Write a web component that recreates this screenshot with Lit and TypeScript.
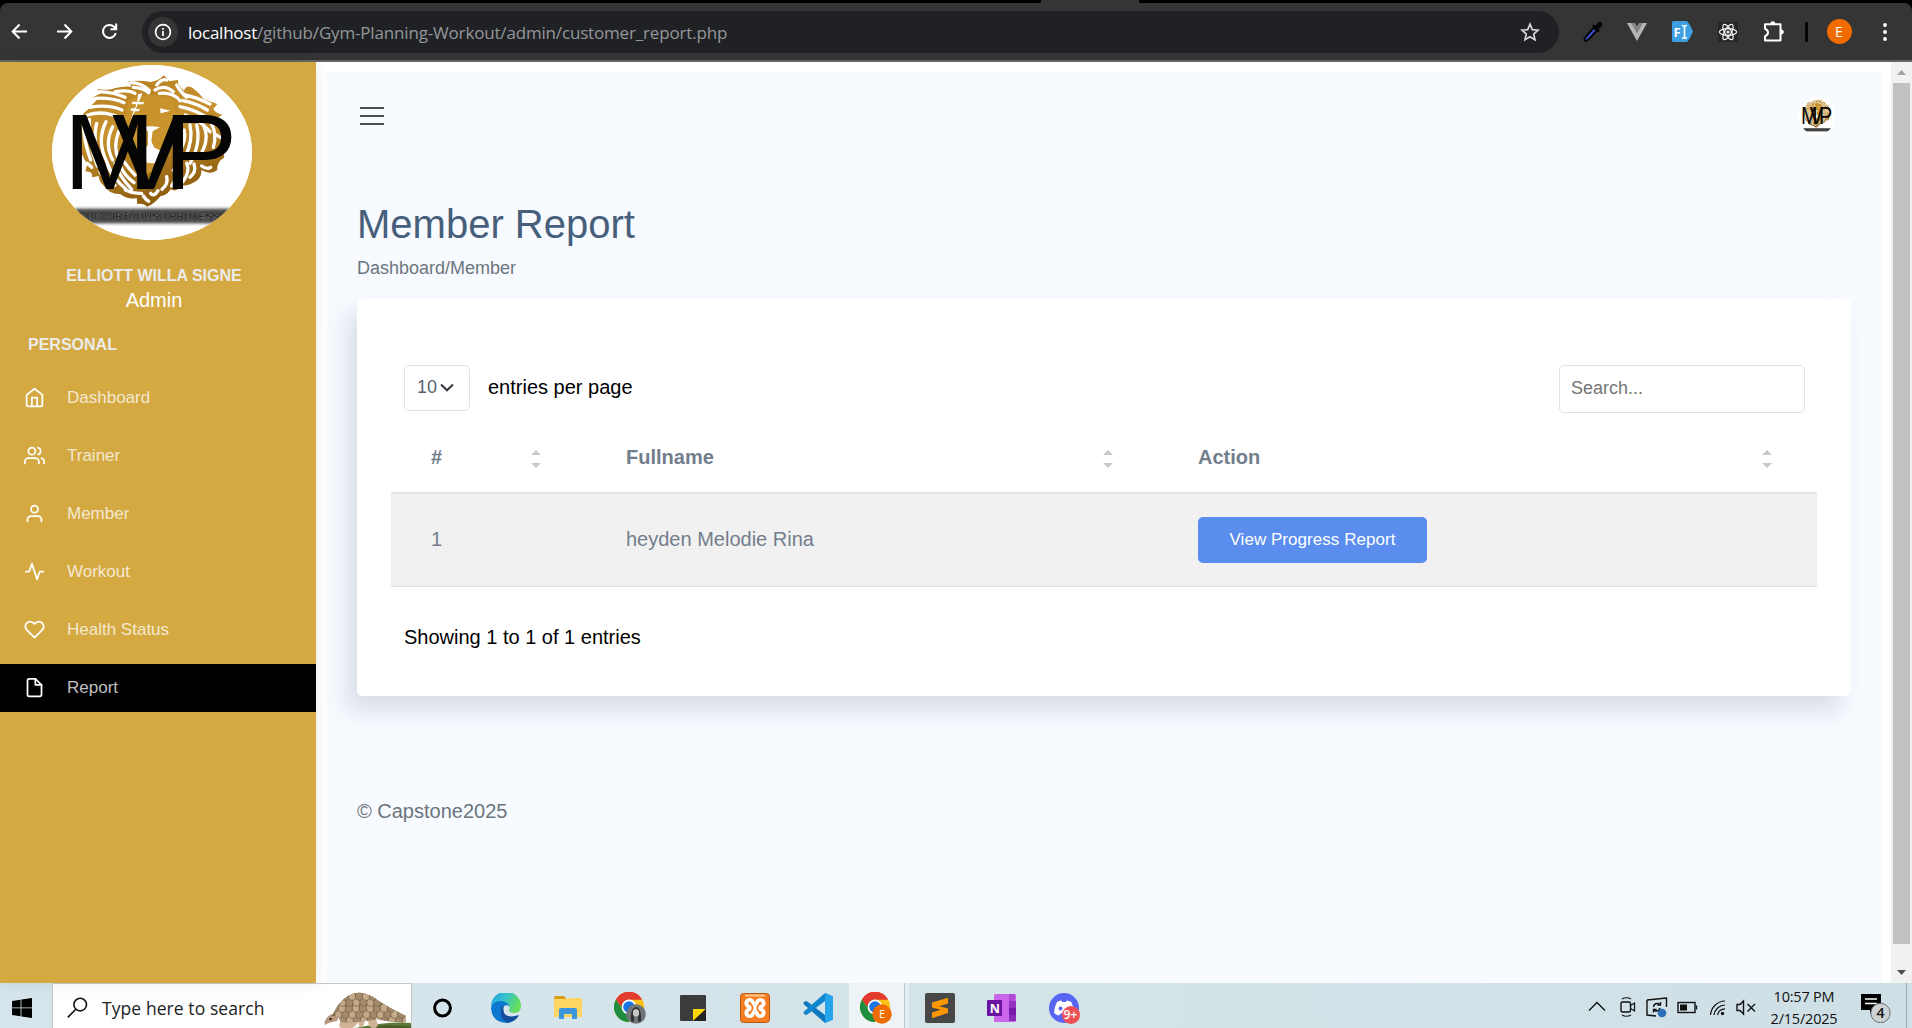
import { LitElement, html, svg, css } from "lit";
import { customElement, property } from "lit/decorators.js";

/* Emblem: lion head behind the club initials. */
@customElement("club-emblem")
class ClubEmblem extends LitElement {
  static styles = css`
    :host { display: block; border-radius: 50%; overflow: hidden; background: #fff; }
    .art { display: block; width: 100%; height: 100%; }
    .mono { font-family: "Liberation Sans", Arial, sans-serif; font-size: 100px; fill: #050505; }
    .band { font: 700 34px "Liberation Sans", Arial, sans-serif; fill: #111; stroke: #858585; stroke-width: 1.2; }
  `;
  render() {
    const hair = [
      "M300 95 Q345 98 375 112", "M285 115 Q335 112 372 128", "M268 142 Q325 132 366 150", "M262 165 Q310 150 356 172",
      "M345 95 Q385 88 405 100", "M392 68 Q425 68 448 92", "M400 82 Q430 84 446 98", "M470 75 Q485 55 500 60",
      "M465 90 Q495 72 520 95", "M478 100 Q520 96 540 122", "M530 75 Q540 95 560 112", "M555 105 Q590 112 630 132",
      "M548 122 Q590 130 622 150", "M540 140 Q590 150 628 178", "M556 165 Q600 180 630 215", "M250 185 Q250 240 272 300",
      "M268 178 Q262 240 292 318", "M290 190 Q275 250 308 330", "M318 185 Q290 240 318 300 Q330 330 342 352", "M338 200 Q312 250 338 300",
      "M356 215 Q338 260 356 300", "M262 310 L275 322", "M300 335 Q315 362 345 376", "M322 318 Q345 360 378 388",
      "M345 310 Q355 345 395 388", "M362 320 Q372 345 402 368", "M372 305 Q385 325 405 345", "M376 390 Q400 402 425 400",
      "M570 195 Q580 240 556 290", "M590 195 Q604 250 570 310", "M612 200 Q630 240 598 290", "M634 190 Q652 225 640 262",
      "M552 210 Q560 240 540 270", "M540 300 Q552 320 532 345", "M560 310 Q572 335 548 366", "M582 312 Q590 335 570 352",
      "M605 318 Q622 330 632 322", "M520 330 Q535 350 515 378", "M500 350 Q506 370 486 388", "M452 400 Q462 412 474 392",
      "M640 280 Q655 270 664 262", "M650 225 Q664 235 676 240", "M430 408 Q438 420 446 424",
    ];
    return html`<svg class="art" viewBox="156 15 600 525" preserveAspectRatio="none">
      <defs>
        <linearGradient id="gold" x1="0" y1="0" x2="0.3" y2="1">
          <stop offset="0" stop-color="#b07a1c" /><stop offset=".45" stop-color="#c8922e" /><stop offset="1" stop-color="#8f5f10" />
        </linearGradient>
        <filter id="soft" x="-10%" y="-60%" width="120%" height="220%"><feGaussianBlur stdDeviation="5" /></filter>
      </defs>
      <rect x="156" y="15" width="600" height="525" fill="#fff" />
      <path fill="url(#gold)" d="M232 205 Q240 165 262 150 L292 118 L278 112 L303 100 L292 88 Q330 92 346 84 Q370 78 395 80 L385 64 Q420 60 452 66 Q480 62 490 46 Q500 52 508 64 L534 60 Q532 76 552 92 Q560 72 578 84 Q600 100 612 118 L652 132 L640 146 Q646 160 668 164 L648 176 Q668 205 662 222 L688 238 L668 248 Q684 262 668 276 Q680 294 662 300 Q650 316 652 330 Q632 346 604 330 Q606 350 590 362 Q560 380 548 376 Q530 398 512 388 Q500 408 482 408 Q462 432 442 440 Q430 428 412 432 L410 414 Q385 420 360 402 Q330 404 310 376 Q296 362 296 348 L276 352 Q280 334 256 334 L262 312 Q240 280 236 250 Q226 228 240 215 Z" />
      <g fill="none" stroke="#fff" stroke-width="10" stroke-linecap="round">${hair.map((d) => svg`<path d=${d} />`)}</g>
      <path fill="#c9932d" d="M386 120 Q440 92 520 118 L528 165 L530 235 L492 275 L470 330 L430 345 L392 290 L372 250 L378 170 Z" />
      <path fill="#fff" d="M414 102 l14 -2 l-12 26 l16 0 l-2 7 l-17 0 l-5 14 l12 0 l-4 7 l-11 0 l-12 24 l8 -26 l-10 0 l3 -7 l11 0 l4 -12 l-14 -1 l3 -7 l14 0 Z" />
      <path fill="#fff" d="M480 145 L512 152 L482 160 Z M424 202 Q450 196 480 202 L458 214 L454 244 L462 262 L484 274 L486 305 Q460 314 432 305 L426 274 L444 256 L444 214 Z" />
      <text class="mono" transform="translate(191 388) scale(3.3 3.2)" x="0 44 91">MVP</text>
      <rect x="225" y="446" width="465" height="44" fill="#222" opacity=".85" filter="url(#soft)" />
      <text class="band" x="234" y="480" textLength="456" lengthAdjust="spacingAndGlyphs">MUM VIRTUOUSO PROXESSIO</text>
    </svg>`;
  }
}

/* Browser toolbar */
@customElement("browser-bar")
class BrowserBar extends LitElement {
  static styles = css`
    :host { display: block; height: 62px; background: #000; box-sizing: border-box; font-family: "Open Sans", "Noto Sans", sans-serif; }
    .strip { height: 3px; display: flex; padding-left: 1041px; }
    .tab { width: 98px; height: 3px; background: #353535; }
    .bar { height: 59px; box-sizing: border-box; border-bottom: 2px solid #666; background: #353535; border-radius: 8px 8px 0 0; display: flex; align-items: center; padding-left: 9px; }
    .nav { display: flex; gap: 24px; }
    .nav svg { display: block; }
    .pill { margin-left: 22px; width: 1417px; height: 42px; background: #202124; border-radius: 21px; display: flex; align-items: center; box-sizing: border-box; padding: 0 19px 0 6px; }
    .info { width: 30px; height: 30px; border-radius: 50%; background: #353535; display: grid; place-items: center; }
    .url { margin-left: 10px; flex: 1; font-size: 17px; letter-spacing: -0.17px; color: #94979b; white-space: nowrap; line-height: 24px; padding-top: 2px; }
    .host { color: #fff; letter-spacing: -0.25px; }
    .ext { display: flex; align-items: center; padding-left: 24px; }
    .ext svg { display: block; }
    .sep { width: 2.5px; height: 20px; background: #050505; margin-left: 20px; border-radius: 1px; }
    .me { width: 25px; height: 25px; border-radius: 50%; background: #f06c00; color: #fff; font-size: 14px; display: grid; place-items: center; margin-left: 19px; }
    .f { font: 700 13px "Open Sans", sans-serif; fill: #fff; }
    .g24 { margin-left: 24px; }
    .g25 { margin-left: 25px; }
    .g31 { margin-left: 31px; }
  `;
  render() {
    return html`
      <div class="strip"><div class="tab"></div></div>
      <div class="bar">
        <div class="nav">
          <svg width="21" height="21" viewBox="0 0 21 21" fill="none" stroke="#fff" stroke-width="2"><path d="M18 10.5H4M10.5 3.5L3.7 10.5L10.5 17.5" /></svg>
          <svg width="21" height="21" viewBox="0 0 21 21" fill="none" stroke="#fff" stroke-width="2"><path d="M3 10.5H17M10.5 3.5L17.3 10.5L10.5 17.5" /></svg>
          <svg width="21" height="21" viewBox="0 0 21 21" fill="none" stroke="#fff" stroke-width="2"><path d="M16.8 12A6.5 6.5 0 1 1 15.3 6L17 7.8M17.2 2.5V8.3H11.5" /></svg>
        </div>
        <div class="pill">
          <span class="info"><svg width="18" height="18" viewBox="0 0 18 18"><circle cx="9" cy="9" r="7.4" fill="none" stroke="#fff" stroke-width="1.7" /><path d="M9 8V13M9 5V6.8" stroke="#fff" stroke-width="1.7" /></svg></span>
          <span class="url"><span class="host">localhost</span>/github/Gym-Planning-Workout/admin/customer_report.php</span>
          <svg width="20" height="20" viewBox="0 0 20 20" fill="none" stroke="#d5d6d8" stroke-width="1.7"><path d="M10 2.2L12.3 7.6L18.1 8.1L13.7 12L15 17.7L10 14.7L5 17.7L6.3 12L1.9 8.1L7.7 7.6Z" /></svg>
        </div>
        <div class="ext">
          <svg width="20" height="22" viewBox="0 0 20 22"><path d="M2.5 16L11 6.5L14 9.5L5.5 18.5Q3 20.5 1.8 19.5Q1 18.5 2.5 16Z" fill="#3b52d8" stroke="#050505" stroke-width="2" /><path d="M9 4.5L11 3.5L12.5 4.8L15 1.5Q17.5 0 19 2Q20 4 18.5 5.5L15.7 8L16.8 9.5L15.5 11.5Z" fill="#050505" /></svg>
          <svg class="g24" width="20" height="18" viewBox="0 0 20 18"><path d="M0 0H4.5L10 9.8L15.5 0H20L10 18Z" fill="#b5b5b5" /><path d="M4.5 0H8L10 3.6L12 0H15.5L10 9.8Z" fill="#858585" /></svg>
          <svg class="g25" width="21" height="21" viewBox="0 0 21 21"><path d="M1.5 0H15L18 4L21 10.5L18 17L15 21H1.5Q0 21 0 19.5V1.5Q0 0 1.5 0Z" fill="#3ea0e2" /><text class="f" x="1.5" y="15.5">F</text><path d="M10 4.5Q12.3 4.5 12.5 6Q12.7 4.5 15 4.5M12.5 6V16M10 17.2Q12.3 17.2 12.5 16Q12.7 17.2 15 17.2" fill="none" stroke="#fff" stroke-width="1.6" /></svg>
          <svg class="g24" width="22" height="22" viewBox="-11 -11 22 22" fill="none" stroke="#f2f2f2" stroke-width="1.2"><rect x="-10" y="-10" width="20" height="20" fill="#272727" stroke="none" /><ellipse rx="8.6" ry="3.3" /><ellipse rx="8.6" ry="3.3" transform="rotate(60)" /><ellipse rx="8.6" ry="3.3" transform="rotate(120)" /><circle r="1.5" fill="#f2f2f2" stroke="none" /></svg>
          <svg class="g24" width="22" height="23" viewBox="0 0 22 23"><path d="M2 4.200H17.500V20.600H2V16.200Q5 15 5 12.500Q5 10 2 8.800Z" fill="none" stroke="#fff" stroke-width="2" stroke-linejoin="round" /><path d="M7.300 4Q7.300 1.300 9.800 1.300Q12.300 1.300 12.300 4ZM18 9.500Q20.800 9.700 20.800 12Q20.800 14.300 18 14.500Z" fill="#fff" /></svg>
          <span class="sep"></span>
          <span class="me">E</span>
          <svg class="g31" width="4" height="20" viewBox="0 0 4 20" fill="#fff"><circle cx="2" cy="3" r="1.9" /><circle cx="2" cy="10" r="1.9" /><circle cx="2" cy="17" r="1.9" /></svg>
        </div>
      </div>`;
  }
}

const navItems = [
  { label: "Dashboard", icon: svg`<path d="M3 9l9-7 9 7v11a2 2 0 0 1-2 2H5a2 2 0 0 1-2-2z" /><path d="M9 22V12h6v10" />` },
  { label: "Trainer", icon: svg`<path d="M17 21v-2a4 4 0 0 0-4-4H5a4 4 0 0 0-4 4v2" /><circle cx="9" cy="7" r="4" /><path d="M23 21v-2a4 4 0 0 0-3-3.87M16 3.13a4 4 0 0 1 0 7.75" />` },
  { label: "Member", icon: svg`<path d="M20 21v-2a4 4 0 0 0-4-4H8a4 4 0 0 0-4 4v2" /><circle cx="12" cy="7" r="4" />` },
  { label: "Workout", icon: svg`<path d="M22 12h-4l-3 9L9 3l-3 9H2" />` },
  { label: "Health Status", icon: svg`<path d="M20.84 4.61a5.5 5.5 0 0 0-7.78 0L12 5.67l-1.06-1.06a5.5 5.5 0 0 0-7.78 7.78l1.06 1.06L12 21.23l7.78-7.78 1.06-1.06a5.5 5.5 0 0 0 0-7.78z" />` },
  { label: "Report", icon: svg`<path d="M13 2H6a2 2 0 0 0-2 2v16a2 2 0 0 0 2 2h12a2 2 0 0 0 2-2V9z" /><path d="M13 2v7h7" />` },
];

@customElement("side-menu")
class SideMenu extends LitElement {
  @property() active = "Report";
  static styles = css`
    :host { display: flex; flex-direction: column; width: 316px; background: #d4a942; padding-top: 3px; box-sizing: border-box; box-shadow: 0 0 14px rgba(40, 40, 60, 0.1); z-index: 1; }
    .logo { width: 200px; height: 175px; margin-left: 52px; }
    .who { margin-top: 26px; text-align: center; font-size: 16px; font-weight: 700; line-height: 20px; color: #ececec; padding-right: 8px; }
    .role { text-align: center; font-size: 20px; line-height: 24px; margin-top: 2px; color: #fff; padding-right: 8px; }
    .group { margin: 23px 0 0 28px; font-size: 16px; font-weight: 700; line-height: 20px; color: #ececec; }
    .menu { margin-top: 19px; display: flex; flex-direction: column; gap: 10px; }
    .item { height: 48px; box-sizing: border-box; display: flex; align-items: center; gap: 22px; padding: 0 0 1px 24px; color: rgba(255, 255, 255, 0.76); font-size: 17px; }
    .item svg { display: block; }
    .label { line-height: 20px; }
    .on { background: #000; }
  `;
  render() {
    return html`
      <club-emblem class="logo"></club-emblem>
      <div class="who">ELLIOTT WILLA SIGNE</div>
      <div class="role">Admin</div>
      <div class="group">PERSONAL</div>
      <nav class="menu">
        ${navItems.map((n) => html`<a class="item ${n.label === this.active ? "on" : ""}">
          <svg width="21" height="21" viewBox="0 0 24 24" fill="none" stroke="#fff" stroke-width="2" stroke-linecap="round" stroke-linejoin="round">${n.icon}</svg>
          <span class="label">${n.label}</span></a>`)}
      </nav>`;
  }
}

@customElement("report-page")
class ReportPage extends LitElement {
  static styles = css`
    :host { display: block; flex: 1; background: #fff; padding: 10px 10px 0 11px; box-sizing: border-box; }
    .area { height: 100%; background: #f7faff; padding: 0 30px; box-sizing: border-box; display: flex; flex-direction: column; }
    .top { height: 88px; display: flex; align-items: center; justify-content: space-between; padding: 0 16px 0 3px; }
    .burger { display: flex; flex-direction: column; gap: 6px; }
    .burger i { display: block; width: 24px; height: 2px; background: #4a4b4d; }
    .avatar { width: 36px; height: 38px; }
    h3 { margin: 40px 0 0; font-size: 40px; line-height: 48px; font-weight: 400; color: #475f7b; }
    .crumb { font-size: 18px; line-height: 24px; margin-top: 8px; color: #6c757d; }
    .card { margin-top: 19px; height: 397px; box-sizing: border-box; border-radius: 5px; background: #fff; box-shadow: -10px 15px 22.5px rgba(25, 42, 70, 0.13); padding: 66px 34px 0; }
    .tools { display: flex; justify-content: space-between; align-items: flex-start; padding: 0 12px 0 13px; height: 48px; }
    .per { display: flex; align-items: center; gap: 18px; font-size: 20px; color: #000; }
    .entries { padding-bottom: 2px; }
    .select { width: 66px; height: 46px; box-sizing: border-box; border: 1px solid #dfe3e7; border-radius: 5px; display: flex; align-items: center; padding: 0 0 1px 12px; gap: 3px; font-size: 18px; color: #59636e; }
    .search { width: 246px; height: 48px; box-sizing: border-box; border: 1px solid #dfe3e7; border-radius: 5px; padding: 0 11px 2px; font: 18px "Liberation Sans", Arial, sans-serif; background: #fff; display: block; }
    .search::placeholder { color: #757575; opacity: 1; }
    .row { display: grid; grid-template-columns: 196px 572px 1fr; font-size: 20px; color: #727e8c; }
    .cell { display: flex; align-items: center; padding: 0 45px 0 39px; }
    .cell:first-child { padding-left: 40px; }
    .text { padding-bottom: 2px; }
    .head { height: 81px; box-sizing: border-box; border-bottom: 2px solid #dfe3e7; font-weight: 700; }
    .head .cell { justify-content: space-between; padding-top: 10px; }
    .sort { display: flex; flex-direction: column; gap: 8px; padding-top: 3px; }
    .head .cell:not(:last-child) { padding-right: 46px; }
    .body { height: 93px; box-sizing: border-box; border-bottom: 1px solid #dfe3e7; background: #f1f1f1; }
    .btn { width: 229px; height: 46px; border: 0; border-radius: 5px; background: #5a8dee; color: #fff; font: 17px "Liberation Sans", Arial, sans-serif; letter-spacing: 0.05px; padding: 0; }
    .showing { padding: 38px 0 0 13px; font-size: 20px; line-height: 24px; color: #000; }
    .foot { margin-top: 103px; font-size: 20px; line-height: 24px; color: #6c757d; }
  `;
  render() {
    const sort = html`<span class="sort"><svg width="10" height="5" viewBox="0 0 10 5"><path d="M0 5L5 0L10 5Z" fill="#c9c9c9" /></svg><svg width="10" height="5" viewBox="0 0 10 5"><path d="M0 0L5 5L10 0Z" fill="#c9c9c9" /></svg></span>`;
    return html`<div class="area">
      <div class="top"><span class="burger"><i></i><i></i><i></i></span><club-emblem class="avatar"></club-emblem></div>
      <h3>Member Report</h3>
      <div class="crumb">Dashboard/Member</div>
      <section class="card">
        <div class="tools">
          <div class="per"><span class="select">10<svg width="14" height="9" viewBox="0 0 14 9" fill="none" stroke="#343a40" stroke-width="2"><path d="M1 1.5L7 7.3L13 1.5" /></svg></span><span class="entries">entries per page</span></div>
          <input class="search" placeholder="Search..." />
        </div>
        <div class="row head">${["#", "Fullname", "Action"].map((t) => html`<span class="cell"><span>${t}</span>${sort}</span>`)}</div>
        <div class="row body"><span class="cell"><span class="text">1</span></span><span class="cell"><span class="text">heyden Melodie Rina</span></span><span class="cell"><button class="btn">View Progress Report</button></span></div>
        <div class="showing">Showing 1 to 1 of 1 entries</div>
      </section>
      <div class="foot">© Capstone2025</div>
    </div>`;
  }
}

const chrome = svg`
  <circle cx="15" cy="15" r="15" fill="#fbc116" />
  <path d="M2 7.5A15 15 0 0 0 15 30L21.5 18.7L15 15L8.5 18.7Z" fill="#1e8e3e" />
  <path d="M15 30A15 15 0 0 0 28 7.5H15L21.5 18.7Z" fill="#fbc116" /><path d="M2 7.5A15 15 0 0 1 28 7.5H15L8.5 11.500Z" fill="#e33b2e" />
  <path d="M2 7.500L8.500 18.700L15 15V7.500Z" fill="#1e8e3e" /><path d="M2 7.500A15 15 0 0 1 28 7.500H15Q10 7.500 8 12.500L6.500 14Z" fill="#e33b2e" />
  <circle cx="15" cy="15" r="7.4" fill="#fff" /><circle cx="15" cy="15" r="5.8" fill="#1a73e8" />`;

/* Desktop taskbar */
@customElement("task-bar")
class TaskBar extends LitElement {
  static styles = css`
    :host { display: flex; height: 45px; background: linear-gradient(90deg, #d6e5ec, #d3e4e9 55%, #cfdfe6); font-family: "Open Sans", "Noto Sans", sans-serif; color: #111; overflow: hidden; }
    svg { display: block; }
    .start { width: 52px; display: flex; align-items: center; padding-left: 12px; box-sizing: border-padding; box-sizing: border-box; padding-top: 4px; }
    .find { width: 360px; box-sizing: border-box; background: #fff; border: 1px solid #c6c9cb; border-bottom: 0; display: flex; align-items: center; padding-left: 14px; }
    .glass { margin-top: 3px; }
    .hint { flex: 1; margin-left: 14px; font-size: 17.5px; letter-spacing: 0.08px; line-height: 24px; padding-top: 3px; white-space: nowrap; color: #222; }
    .apps { display: flex; flex: 1; }
    .app { width: 62.4px; flex: none; display: flex; align-items: center; justify-content: center; padding-top: 5px; box-sizing: border-box; height: 45px; }
    .live { width: 56px; background: #edf3f6; border-right: 1px solid #b4cbd0; }
    .edge { width: 4px; flex: none; background: #e2edf1; }
    .tray { display: flex; align-items: center; padding-top: 3px; }
    .clock { text-align: center; font-size: 14.5px; letter-spacing: -0.2px; line-height: 22px; width: 74px; white-space: nowrap; margin-left: 11px; padding-top: 2px; }
    .note { margin-left: 20px; }
    .end { width: 1px; background: #98a8ae; margin-left: 14px; }
    .rest { width: 5px; }
    .t { fill: #fff; font-family: "Open Sans", sans-serif; }
    .e { font-size: 11px; }
    .n { font-size: 12.5px; font-weight: 700; }
    .d { font-size: 12px; font-weight: 600; }
    .k { font-size: 14px; font-weight: 600; font-family: "Open Sans", sans-serif; fill: #111; }
  `;
  private pangolin() {
    const rows = [
      { y: 33, x0: 22, x1: 90 }, { y: 27, x0: 14, x1: 84 }, { y: 21, x0: 14, x1: 72 },
      { y: 15, x0: 18, x1: 60 }, { y: 9, x0: 24, x1: 54 },
    ];
    const scales = rows.flatMap((r, i) => {
      const out = [];
      for (let x = r.x0 + (i % 2) * 3.5, k = 0; x < r.x1; x += 7, k++) {
        out.push(svg`<ellipse cx=${x} cy=${r.y - 2} rx="3.7" ry="4.3" fill=${(k + i) % 2 ? "#c4aa88" : "#a58b6b"} stroke="#77624a" stroke-width=".7" />`);
      }
      return out;
    });
    return svg`<path d="M0 44Q12 37 34 39Q70 32 90 34V44Z" fill="#5a7836" /><path d="M36 42Q60 33 90 38V44H30Z" fill="#4a5a28" />
      <path d="M20 30L18 37Q24 42 33 38L38 33ZM38 33Q37 40 42 38L44 32ZM47 31L48 37Q54 42 57 36L55 30Z" fill="#d0b495" />
      <path d="M4 36Q2 31 9 26Q14 23 18 27L16 32Q8 33 4 36Z" fill="#b99a7e" />
      <clipPath id="shell"><path d="M11 27Q18 12 27 7Q38 0 52 8Q66 18 85 27V33Q70 34 56 30Q36 34 20 33L17 27Z" /></clipPath>
      <g clip-path="url(#shell)"><rect width="90" height="44" fill="#7d674d" />${scales}</g>
      <circle cx="9.5" cy="30" r="1.2" fill="#222" />`;
  }
  render() {
    return html`
      <span class="start"><svg width="20" height="20" viewBox="0 0 20 20"><path d="M0 3L8.6 1.8V9.5H0ZM9.4 1.6L20 0V9.5H9.4ZM0 10.3H8.6V18.2L0 17ZM9.4 10.3H20V20L9.4 18.4Z" /></svg></span>
      <span class="find">
        <svg class="glass" width="21" height="21" viewBox="0 0 21 21" fill="none" stroke="#111" stroke-width="1.6"><circle cx="13.2" cy="7.6" r="6.3" /><path d="M8.8 12.2L.8 20.4" /></svg>
        <span class="hint">Type here to search</span>
        <svg width="90" height="44" viewBox="0 -5 90 44">${this.pangolin()}</svg>
      </span>
      <span class="apps">
        <span class="app"><svg width="20" height="20" viewBox="0 0 20 20"><circle cx="9.5" cy="10" r="7.9" fill="none" stroke="#000" stroke-width="3" /></svg></span>
        <span class="app"><svg width="30" height="30" viewBox="0 0 30 30">
          <defs><linearGradient id="ea" x1="0" y1="0" x2="1" y2="0.4"><stop offset="0" stop-color="#1da1e0" /><stop offset=".5" stop-color="#35c1d0" /><stop offset="1" stop-color="#66de5a" /></linearGradient></defs>
          <path d="M0 14A15 15 0 0 1 30 13Q30 20 23 20Q18 20 18 17Q19 15 18 13Q16 9 11 9Q4 9 0 14Z" fill="url(#ea)" />
          <path d="M0 15Q2 8 9 8Q16 8 18.5 13Q13 11 11 15Q9 21 14 25Q19 29 27 24Q22 30 15 30Q1 29 0 15Z" fill="#0c78d0" />
          <path d="M10 16Q8 27 18 29.6Q24 28 28 22.5Q27 22 24 23Q13 25 12.5 17Q12 14 13.5 12.5Q10.5 13 10 16Z" fill="#134f9c" /></svg></span>
        <span class="app"><svg width="28" height="24" viewBox="0 0 28 24"><path d="M0 2Q0 0 2 0H10L13 4H0Z" fill="#d99b12" /><path d="M0 3H12L14 2H26Q28 2 28 4V21H0Z" fill="#ffd563" /><path d="M5 23V14Q5 12 7 12H21Q23 12 23 14V23H18V18H10V23Z" fill="#3d96dc" /></svg></span>
        <span class="app"><svg width="33" height="32" viewBox="0 0 33 32">${chrome}<circle cx="22" cy="22" r="9.8" fill="#70757a" /><path d="M17 29Q16 16 22 15Q28 16 27 29L24 30V24Q22 20 20 24V30Z" fill="#303235" /><path d="M19 19Q22 15 25 19V23Q22 26 19 23Z" fill="#c9c9c9" /></svg></span>
        <span class="app"><svg width="26" height="26" viewBox="0 0 26 26"><rect width="26" height="26" rx="1" fill="#3b3b3b" /><path d="M13 14H26L13 26Z" fill="#ffd800" /><path d="M26 14V26H13Z" fill="#242424" /></svg></span>
        <span class="app"><svg width="30" height="30" viewBox="0 0 30 30"><rect x=".5" y=".5" width="29" height="29" rx="3" fill="#f57c20" stroke="#b85a14" /><path d="M5 2.5H25" stroke="#ffc58f" stroke-width="2" /><g fill="none" stroke="#fff" stroke-width="3.800"><circle cx="9.7" cy="10.3" r="3.4" /><circle cx="20.3" cy="10.3" r="3.4" /><circle cx="9.7" cy="19.8" r="3.4" /><circle cx="20.3" cy="19.8" r="3.4" /></g><path d="M12 12H18V18H12Z" fill="#fff" /><path d="M9.5 9.500L12.500 13.5V16.500L9.500 20.500M20.5 9.500L17.500 13.5V16.500L20.500 20.500" fill="none" stroke="#f57c20" stroke-width="1.8" /></svg></span>
        <span class="app"><svg width="30" height="30" viewBox="0 0 30 30"><path d="M22 0L30 3.5V26.5L22 30L1 11.5Q0 10 1 9L3 8Q4 8 5 9L22 22Z" fill="#0e79bf" /><path d="M22 8L5 21Q4 22 3 22L1 21Q0 20 1 18.5L22 0Z" fill="#1286cc" /><path d="M22 0L30 3.5V26.5L22 30Z" fill="#27a4ee" /></svg></span>
        <span class="app live"><svg width="33" height="32" viewBox="0 0 33 32">${chrome}<circle cx="22" cy="22" r="9.7" fill="#ef6c00" /><text class="t e" x="18.9" y="26">E</text></svg></span>
        <span class="edge"></span>
        <span class="app"><svg width="30" height="30" viewBox="0 0 30 30"><rect width="30" height="30" rx="2" fill="#474747" /><path d="M7 9.6L23 4.8V10.6L14 13.3L23 15.4V20L7 25.2V19.5L15.8 16.7L7 14.6Z" fill="#ff9800" /></svg></span>
        <span class="app"><svg width="30" height="28" viewBox="0 0 30 28"><rect x="7" y="0" width="22" height="28" rx="1.5" fill="#ca64ea" /><path d="M22 0H28V7H22Z" fill="#ae4bd5" /><path d="M22 7H29V14H22Z" fill="#9332bf" /><path d="M22 14H29V21H22Z" fill="#7719aa" /><path d="M22 21H29V27H22Z" fill="#8a2ab5" /><rect x="0" y="6" width="15" height="16" rx="1" fill="#6a14a0" /><text class="t n" x="2.8" y="18.5">N</text></svg></span>
        <span class="app"><svg width="32" height="31" viewBox="0 0 32 31"><circle cx="15" cy="15" r="15" fill="#5865f2" /><path d="M8 9Q11 7.3 12.5 7.5L13.3 9H17L17.8 7.5Q20 7.5 22.3 9Q25 14 25 20Q22 22.5 20 22.5L18.5 20.5H11.5L10 22.5Q7.5 22 5 20Q5 14 8 9Z" fill="#fff" /><circle cx="11.5" cy="15.5" r="2" fill="#5865f2" /><circle cx="22" cy="22" r="9" fill="#ee5055" /><text class="t d" x="14.6" y="26.300">9+</text></svg></span>
      </span>
      <span class="tray">
        <svg width="168" height="24" viewBox="0 0 168 24" fill="none" stroke="#111" stroke-width="1.4">
          <path d="M1 15.5L9 7.5L17 15.5" />
          <rect x="33" y="7" width="9.500" height="10" rx="1.5" /><path d="M42.500 10.5L46.500 8V16L42.500 13.5M34 4Q38.500 1.500 43 4M34 20Q38.500 22.500 43 20" stroke-width="1.200" />
          <path d="M59 5L78.5 3V12M59 5V20L68 21M65.5 12Q66 8 70 8.5L72.5 10M72.5 7V10H69.5M72 13Q71 16.5 67.5 16L65.5 14.5M65.5 17.5V14.5H68.5" /><circle cx="74" cy="18" r="4.3" fill="#2a6fb8" stroke="none" />
          <rect x="90" y="7.5" width="17" height="10" /><path d="M108.5 10.5V14.5" /><rect x="92" y="9.5" width="7" height="6" fill="#111" stroke="none" />
          <path d="M122.5 20A15 15 0 0 1 137 6M126 20A11.5 11.5 0 0 1 137 10M129.5 20A8 8 0 0 1 137 13.8" stroke-width="1.2" /><circle cx="134.5" cy="18.5" r="1.7" fill="#111" stroke="none" />
          <path d="M149 9.5H152L155.5 6V19L152 15.5H149ZM159.5 9L167 16.5M167 9L159.5 16.5" />
        </svg>
        <span class="clock">10:57 PM<br />2/15/2025</span>
        <svg class="note" width="31" height="32" viewBox="0 0 31 32"><path d="M0 3H20V19H12L9 23V19H0Z" fill="#000" /><path d="M4 8H16M4 12.5H16" stroke="#fff" stroke-width="1.5" /><circle cx="19.5" cy="22" r="9.7" fill="#cdd2d5" stroke="#6b6f72" /><text class="k" x="15.5" y="27">4</text></svg>
      </span>
      <span class="end"></span><span class="rest"></span>`;
  }
}

@customElement("app-root")
class AppRoot extends LitElement {
  static styles = css`
    :host { display: flex; flex-direction: column; width: 1912px; height: 1028px; overflow: hidden; font-family: "Liberation Sans", Arial, sans-serif; }
    .view { flex: 1; display: flex; min-height: 0; }
    .scroll { width: 21px; background: #f1f1f1; display: flex; flex-direction: column; align-items: center; box-sizing: border-box; }
    .up, .down { height: 21px; display: grid; place-items: center; }
    .thumb { width: 17px; height: 861px; background: #c1c1c1; }
    .down { margin-top: auto; }
  `;
  render() {
    return html`
      <browser-bar></browser-bar>
      <div class="view">
        <side-menu active="Report"></side-menu>
        <report-page></report-page>
        <div class="scroll">
          <span class="up"><svg width="9" height="5"><path d="M0 5L4.5 0L9 5Z" fill="#a3a3a3" /></svg></span>
          <span class="thumb"></span>
          <span class="down"><svg width="9" height="5"><path d="M0 0L4.5 5L9 0Z" fill="#505050" /></svg></span>
        </div>
      </div>
      <task-bar></task-bar>`;
  }
}
